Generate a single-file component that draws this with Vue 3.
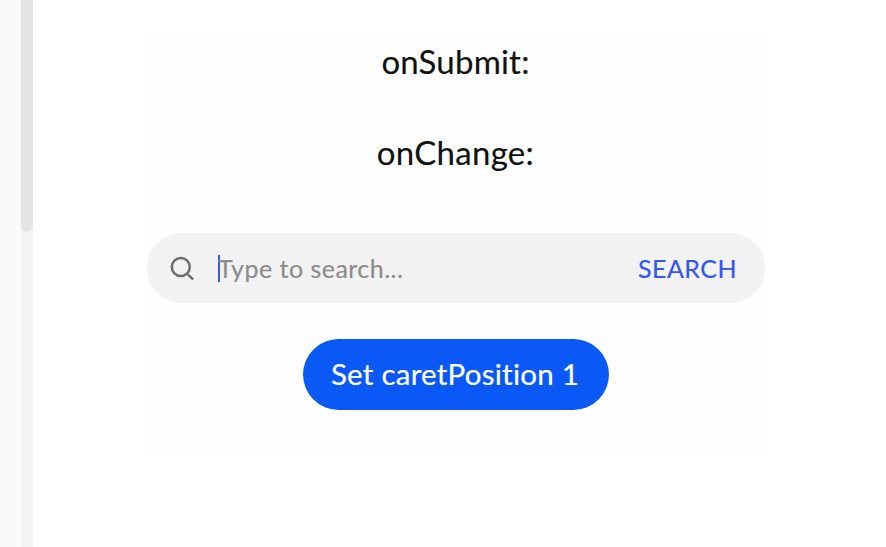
<template>
  <div class="page">
    <aside class="sidebar"></aside>
    <div class="scroll-track">
      <div class="scroll-thumb"></div>
    </div>
    <main>
      <section class="preview">
        <p class="event submit"><span>onSubmit:{{ submitValue }}</span></p>
        <p class="event change"><span>onChange:{{ changeValue }}</span></p>
        <div class="search">
          <svg class="icon" width="26" height="26" viewBox="0 0 26 26">
            <circle cx="10.8" cy="12" r="9" />
            <path d="M17.8 19.6L23.2 24.4" />
          </svg>
          <span class="caret"></span>
          <span class="placeholder">Type to search...</span>
          <span class="search-button" @click="submit">SEARCH</span>
        </div>
        <button class="set-caret"><span>Set caretPosition 1</span></button>
      </section>
    </main>
  </div>
</template>

<script setup>
import { ref } from "vue";

const submitValue = ref("");
const changeValue = ref("");

function submit() {
  submitValue.value = changeValue.value;
}
</script>

<style>
  body {
    margin: 0;
    background: #fff;
  }
</style>

<style scoped>
  .page {
    display: flex;
    height: 547px;
    overflow: hidden;
    font-family: Lato, "Noto Sans", sans-serif;
    font-variant-ligatures: none;
  }

  .sidebar {
    width: 21px;
    background: #fafafa;
  }

  .scroll-track {
    width: 12px;
    background: #f4f4f4;
  }

  .scroll-thumb {
    height: 232px;
    border-radius: 0 0 6px 6px;
    background: #e4e4e4;
  }

  main {
    flex: 1;
    padding: 31px 0 0 112px;
  }

  .preview {
    box-sizing: border-box;
    display: flex;
    flex-direction: column;
    align-items: center;
    width: 622px;
    height: 425px;
    background: #fefefe;
  }

  .event {
    margin: 0;
    height: 91px;
    line-height: 60px;
    font-size: 33px;
    color: #111;
    white-space: nowrap;
    -webkit-text-stroke: 0.15px #111;
  }

  .submit {
    padding-right: 1px;
    letter-spacing: 0.2px;
  }

  .change {
    padding-right: 1px;
    letter-spacing: 0.3px;
  }

  .search {
    box-sizing: border-box;
    display: flex;
    align-items: center;
    width: 618px;
    height: 70px;
    margin-top: 20px;
    padding: 0 28px 0 23px;
    border-radius: 35px;
    background: #f2f2f2;
    font-size: 25px;
    white-space: nowrap;
  }

  .icon {
    fill: none;
    stroke: #6d6d6d;
    stroke-width: 2.5;
  }

  .caret {
    width: 2.5px;
    height: 27px;
    margin-left: 21.5px;
    background: #3358f4;
  }

  .placeholder {
    margin-left: -2px;
    color: #8b8b8b;
    letter-spacing: 0.48px;
    -webkit-text-stroke: 0.15px #8b8b8b;
  }

  .search-button {
    margin-left: auto;
    color: #3557f0;
    letter-spacing: 0.45px;
    -webkit-text-stroke: 0.2px #3557f0;
  }

  .set-caret {
    width: 306px;
    height: 71px;
    margin-top: 36px;
    padding: 0 2px 2px 0;
    border: 0;
    border-radius: 36px;
    background: #0a59f7;
    color: #fff;
    font-family: inherit;
    font-size: 29.5px;
    letter-spacing: 0.25px;
    white-space: nowrap;
    -webkit-text-stroke: 0.2px #fff;
  }
</style>
